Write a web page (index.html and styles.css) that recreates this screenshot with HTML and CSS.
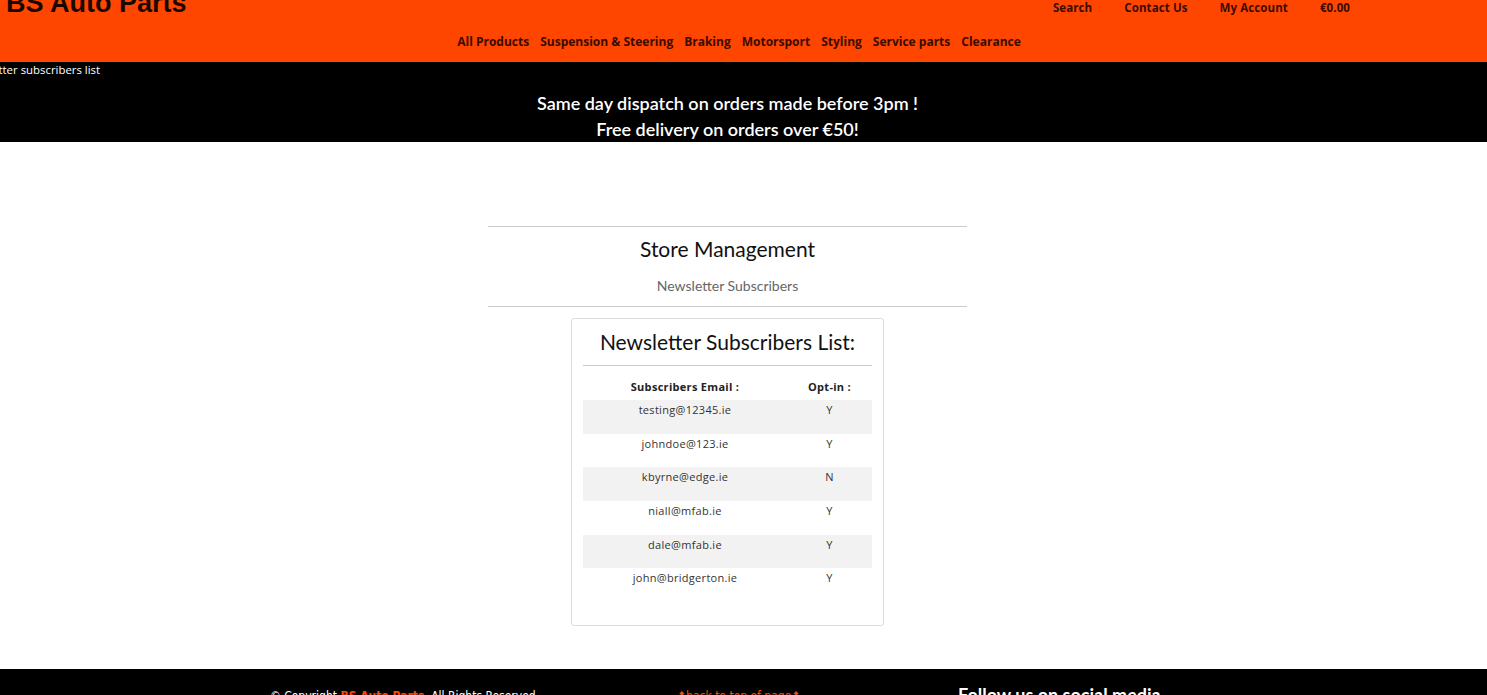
FILE: index.html
```html
<!DOCTYPE html>
<html lang="en">
<head>
<meta charset="utf-8">
<title>Newsletter subscribers list</title>
<link rel="stylesheet" href="styles.css">
</head>
<body>
<header class="site-header">
  <div class="header-top">
    <div class="logo">BS Auto Parts</div>
    <nav class="top-links">
      <a href="#">Search</a>
      <a href="#">Contact Us</a>
      <a href="#">My Account</a>
      <a href="#">€0.00</a>
    </nav>
  </div>
  <nav class="cat-nav">
    <a href="#">All Products</a>
    <a href="#">Suspension &amp; Steering</a>
    <a href="#">Braking</a>
    <a href="#">Motorsport</a>
    <a href="#">Styling</a>
    <a href="#">Service parts</a>
    <a href="#">Clearance</a>
  </nav>
</header>
<section class="promo">
  <div class="crumb">Newsletter subscribers list</div>
  <p class="promo-line">Same day dispatch on orders made before 3pm !</p>
  <p class="promo-line">Free delivery on orders over €50!</p>
</section>
<main class="main">
  <div class="section-head">
    <h1 class="section-title">Store Management</h1>
    <p class="section-sub">Newsletter Subscribers</p>
  </div>
  <div class="card">
    <h2 class="card-title">Newsletter Subscribers List:</h2>
    <table class="subs">
      <thead>
        <tr><th class="col-email">Subscribers Email :</th><th class="col-opt">Opt-in :</th></tr>
      </thead>
      <tbody>
        <tr><td>testing@12345.ie</td><td>Y</td></tr>
        <tr><td>johndoe@123.ie</td><td>Y</td></tr>
        <tr><td>kbyrne@edge.ie</td><td>N</td></tr>
        <tr><td>niall@mfab.ie</td><td>Y</td></tr>
        <tr><td>dale@mfab.ie</td><td>Y</td></tr>
        <tr><td>john@bridgerton.ie</td><td>Y</td></tr>
      </tbody>
    </table>
  </div>
</main>
<footer class="footer">
  <div class="foot-copy">© Copyright <span class="foot-brand">BS Auto Parts</span>. All Rights Reserved</div>
  <a class="foot-top" href="#">⬆back to top of page⬆</a>
  <div class="foot-follow">Follow us on social media</div>
</footer>
</body>
</html>
```

FILE: styles.css
```css
* { box-sizing: border-box; }
html, body { margin: 0; padding: 0; }
body {
  font-family: "Open Sans", "Liberation Sans", sans-serif;
  background: #fff;
  color: #222;
  overflow: hidden;
  height: 695px;
}
a { text-decoration: none; }

.site-header {
  background: #ff4600;
  height: 62px;
}
.header-top {
  display: flex;
  justify-content: space-between;
  align-items: flex-start;
  height: 24px;
}
.logo {
  font-family: "Liberation Sans", Arial, sans-serif;
  font-weight: 700;
  font-size: 27px;
  line-height: 32px;
  color: #1a0800;
  margin-top: -13px;
  padding-left: 6px;
}
.top-links {
  display: flex;
  gap: 32px;
  padding-right: 137px;
}
.top-links a {
  font-weight: 700;
  font-size: 11.5px;
  line-height: 16px;
  color: #3a0c00;
  letter-spacing: 0.1px;
}
.cat-nav {
  display: flex;
  justify-content: center;
  gap: 11px;
  padding-top: 10px;
  padding-right: 9px;
}
.cat-nav a {
  font-weight: 700;
  font-size: 12px;
  line-height: 16px;
  color: #3a0c00;
}

.promo {
  background: #000;
  color: #fff;
  height: 80px;
  padding-right: 32px;
  overflow: hidden;
}
.crumb {
  font-size: 11.4px;
  line-height: 16px;
  margin-left: -40px;
  height: 28px;
}
.promo-line {
  margin: 0;
  text-align: center;
  font-family: "Lato", sans-serif;
  font-weight: 600;
  font-size: 18px;
  line-height: 26px;
}

.main {
  padding: 84px 32px 43px 0;
  display: flex;
  flex-direction: column;
  align-items: center;
}
.section-head {
  width: 479px;
  border-top: 1px solid #ccc;
  border-bottom: 1px solid #ccc;
  text-align: center;
  padding: 7px 0 10px;
}
.section-title {
  margin: 0;
  font-family: "Lato", sans-serif;
  font-weight: 400;
  font-size: 21px;
  line-height: 30px;
  color: #111;
}
.section-sub {
  margin: 12px 0 0;
  font-family: "Lato", sans-serif;
  font-size: 14px;
  line-height: 20px;
  color: #666;
}
.card {
  margin-top: 11px;
  width: 313px;
  border: 1px solid #ddd;
  border-radius: 3px;
  padding: 9px 11px 23px;
}
.card-title {
  margin: 0;
  font-family: "Lato", sans-serif;
  font-weight: 400;
  font-size: 21px;
  line-height: 28px;
  color: #111;
  text-align: center;
  padding-bottom: 9px;
  border-bottom: 1px solid #ccc;
}
.subs {
  width: 100%;
  border-collapse: collapse;
  font-size: 11px;
  letter-spacing: 0.3px;
}
.subs th {
  font-weight: 700;
  color: #222;
  padding: 13px 0 5px;
  line-height: 16px;
}
.col-email { width: 204px; }
.subs td {
  text-align: center;
  color: #333;
  padding: 2px 0 15.67px;
  line-height: 16px;
}
.subs tbody tr:nth-child(odd) { background: #f2f2f2; }

.footer {
  background: #000;
  color: #fff;
  height: 60px;
  display: flex;
  align-items: flex-start;
  padding-top: 19px;
  font-family: "DejaVu Sans Condensed", "Liberation Sans Narrow", sans-serif;
  font-stretch: condensed;
}
.foot-copy {
  margin-left: 270px;
  font-size: 12px;
  font-weight: 400;
  line-height: 16px;
  width: 407px;
}
.foot-brand { color: #ff4600; font-weight: 700; }
.foot-top {
  color: #ff4600;
  font-size: 12px;
  line-height: 16px;
  width: 281px;
}
.foot-follow {
  font-family: "Lato", sans-serif;
  font-size: 18px;
  font-weight: 700;
  line-height: 16px;
  margin-top: -1px;
}
```
